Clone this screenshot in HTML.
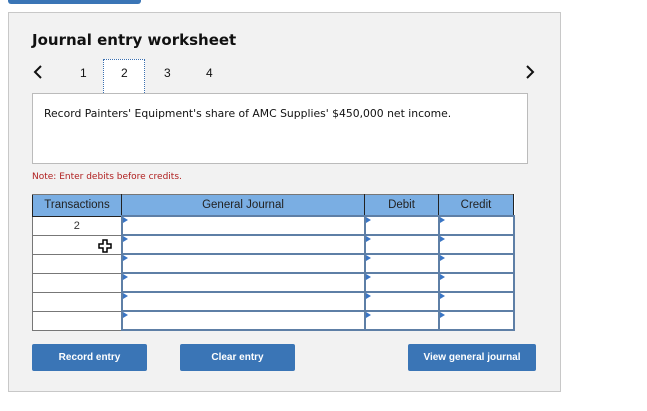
<!DOCTYPE html>
<html><head><style>
body{margin:0;width:647px;height:411px;background:#fff;position:relative;font-family:"Liberation Sans",Arial,sans-serif;overflow:hidden}
.a{position:absolute}
.topbtn{left:8px;top:0;width:133px;height:4px;background:#3a75b6;border-radius:0 0 3px 3px}
.panel{left:8px;top:12px;width:551px;height:378px;background:#f2f2f2;border:1px solid #c8c8c8}
.title{left:32px;top:31px;font:bold 15px "DejaVu Sans",sans-serif;color:#111}
.tab{top:66px;font-size:12px;color:#111}
.tab2{left:103px;top:59px;width:42px;height:34px;background:#fff;border:1px dotted #3a6fb0;box-sizing:border-box;border-bottom:none}
.box{left:32px;top:93px;width:496px;height:71px;background:#fff;border:1px solid #bbb;box-sizing:border-box}
.boxt{left:44px;top:107px;font:10.8px "DejaVu Sans",sans-serif;color:#111}
.note{left:32px;top:172px;font:9px "DejaVu Sans",sans-serif;color:#b02020}
table{position:absolute;left:32px;top:194px;border-collapse:collapse;background:#fff}
th{background:#7aaee3;font-weight:normal;font-size:11.5px;color:#222;height:20px;border:1px solid #222;border-top-color:#777;padding:0}
td{height:17px;border:2px solid #6f7a86;padding:0;position:relative}
td.t{border:1px solid #777;text-align:center;font-size:11px;color:#333}
td.i{border-color:#5e7fa6}
td.i:before{content:"";position:absolute;left:0;top:0;border-left:5px solid #3a75c4;border-top:3px solid transparent;border-bottom:3px solid transparent}
.btn{top:344px;height:27px;background:#3a75b6;color:#fff;font-size:10px;font-weight:bold;text-align:center;line-height:27px;border-radius:2px}
</style></head><body>
<div class="a topbtn"></div>
<div class="a panel"></div>
<div class="a title">Journal entry worksheet</div>
<div class="a tab2"></div>
<svg class="a" style="left:33px;top:65px" width="10" height="14"><path d="M8 1 L2 7 L8 13" stroke="#111" stroke-width="2" fill="none"/></svg>
<div class="a tab" style="left:80px">1</div>
<div class="a tab" style="left:121px">2</div>
<div class="a tab" style="left:164px">3</div>
<div class="a tab" style="left:206px">4</div>
<svg class="a" style="left:525px;top:65px" width="10" height="14"><path d="M2 1 L8 7 L2 13" stroke="#111" stroke-width="2" fill="none"/></svg>
<div class="a box"></div>
<div class="a boxt">Record Painters' Equipment's share of AMC Supplies' $450,000 net income.</div>
<div class="a note">Note: Enter debits before credits.</div>
<table>
<tr><th style="width:88px">Transactions</th><th style="width:242px">General Journal</th><th style="width:73px">Debit</th><th style="width:74px">Credit</th></tr>
<tr><td class="t">2</td><td class="i"></td><td class="i"></td><td class="i"></td></tr>
<tr><td class="t"></td><td class="i"></td><td class="i"></td><td class="i"></td></tr>
<tr><td class="t"></td><td class="i"></td><td class="i"></td><td class="i"></td></tr>
<tr><td class="t"></td><td class="i"></td><td class="i"></td><td class="i"></td></tr>
<tr><td class="t"></td><td class="i"></td><td class="i"></td><td class="i"></td></tr>
<tr><td class="t"></td><td class="i"></td><td class="i"></td><td class="i"></td></tr>
</table>
<svg class="a" style="left:98px;top:239px" width="15" height="14"><path d="M5 1H9V5H13V9H9V13H5V9H1V5H5Z" fill="#fff" stroke="#000" stroke-width="1.5"/></svg>
<div class="a btn" style="left:32px;width:115px">Record entry</div>
<div class="a btn" style="left:180px;width:115px">Clear entry</div>
<div class="a btn" style="left:408px;width:128px">View general journal</div>
</body></html>
